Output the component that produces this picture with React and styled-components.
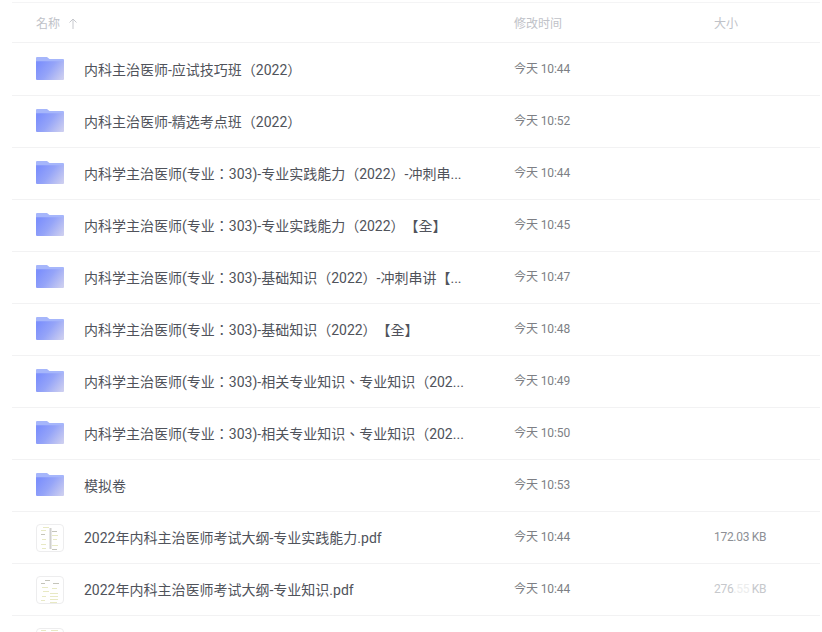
import React from 'react'
import styled, { createGlobalStyle } from 'styled-components'

const GlobalStyle = createGlobalStyle`
  html, body {
    margin: 0;
    height: 632px;
    overflow: hidden;
    background: #fff;
    font-family: Roboto, "Noto Sans CJK TC", sans-serif;
    text-spacing-trim: space-all;
  }
`

const List = styled.div`
  margin: 2px 2px 0 12px;
  height: 630px;
  overflow: hidden;
  border-top: 1px solid #f4f4f5;
`

const rowGrid = `
  display: grid;
  grid-template-columns: 478px 200px 1fr;
  align-items: center;
  padding-left: 24px;
  border-bottom: 1px solid #f2f2f3;
  box-sizing: border-box;
`

const HeaderRow = styled.div`
  ${rowGrid}
  height: 40px;
  font-size: 12px;
  color: #c0c2c8;
`

const SortArrow = styled.span`
  display: inline-flex;
  margin-left: 8px;
  vertical-align: -1px;
`

const Row = styled.div`
  ${rowGrid}
  height: ${p => (p.$first ? 53 : 52)}px;
  padding-top: ${p => (p.$first ? 1 : 0)}px;
`

const NameCell = styled.div`
  display: flex;
  align-items: center;
  gap: 20px;
  min-width: 0;
`

const Name = styled.span`
  white-space: nowrap;
  font-size: 14px;
  line-height: 20px;
  color: #50535b;
`

const Meta = styled.span`
  font-size: 12px;
  line-height: 16px;
  padding-bottom: 2px;
  color: #7d7f85;
  white-space: nowrap;
  letter-spacing: -0.1px;
`

const Size = styled(Meta)`
  color: #8d8f95;
  letter-spacing: -0.3px;
`

// the reference has this size half wiped out by a watermark
const Wiped = styled.span`
  color: ${p => (p.$heavy ? '#eceded' : '#c6c8cc')};
`

const FolderGlyph = styled.svg`
  width: 28px;
  height: 23px;
  flex: none;
  display: block;
  margin-bottom: 2px;
`

const Thumb = styled.svg`
  width: 28px;
  height: 28px;
  flex: none;
  display: block;
  box-sizing: border-box;
  background: #fff;
  border: 1px solid #ededee;
  border-radius: 4px;
`

const FolderIcon = ({ id }) => (
  <FolderGlyph viewBox="0 0 28 24" preserveAspectRatio="none">
    <defs>
      <linearGradient id={id} x1="0" y1="0.3" x2="1" y2="0.8">
        <stop offset="0" stopColor="#7d90fc" />
        <stop offset="0.45" stopColor="#95a4f8" />
        <stop offset="1" stopColor="#cbcdf0" />
      </linearGradient>
    </defs>
    <path d="M1 0h10l2.5 2H27a1 1 0 0 1 1 1v3H0V1a1 1 0 0 1 1-1z" fill="#a6b6fb" />
    <path d="M0 4.5h28V23a1 1 0 0 1-1 1H1a1 1 0 0 1-1-1z" fill={`url(#${id})`} />
  </FolderGlyph>
)

// tiny scan of the pdf's first page
const marks = {
  a: [[6, 2, 6], [4, 5, 5], [15, 6, 5], [4, 9, 4], [15, 10, 6], [5, 14, 4], [16, 14, 4], [4, 19, 5], [15, 20, 6], [5, 23, 4], [15, 24, 5]],
  b: [[8, 3, 5], [4, 6, 4], [16, 6, 6], [5, 10, 6], [15, 11, 5], [6, 14, 6], [13, 16, 8], [5, 19, 4], [13, 19, 8], [4, 23, 4], [13, 22, 8], [13, 25, 7]],
  c: [[4, 1, 5], [14, 1, 7]],
}

const PdfThumb = ({ kind }) => (
  <Thumb viewBox="0 0 26 26">
    {kind === 'a' && <rect x="12.5" y="3" width="2" height="21" fill="#d0d0ce" />}
    {marks[kind].map(([x, y, w]) => (
      <rect key={`${x}-${y}`} x={x} y={y} width={w} height="1" fill={y % 3 === 0 ? '#c4c4ba' : '#e8e9c4'} />
    ))}
  </Thumb>
)

const folders = [
  ['内科主治医师-应试技巧班（2022）', '今天 10:44'],
  ['内科主治医师-精选考点班（2022）', '今天 10:52'],
  ['内科学主治医师(专业：303)-专业实践能力（2022）-冲刺串...', '今天 10:44'],
  ['内科学主治医师(专业：303)-专业实践能力（2022）【全】', '今天 10:45'],
  ['内科学主治医师(专业：303)-基础知识（2022）-冲刺串讲【...', '今天 10:47'],
  ['内科学主治医师(专业：303)-基础知识（2022）【全】', '今天 10:48'],
  ['内科学主治医师(专业：303)-相关专业知识、专业知识（202...', '今天 10:49'],
  ['内科学主治医师(专业：303)-相关专业知识、专业知识（202...', '今天 10:50'],
  ['模拟卷', '今天 10:53'],
]

export default function App() {
  return (
    <>
      <GlobalStyle />
      <List>
        <HeaderRow>
          <span>
            名称
            <SortArrow>
              <svg width="10" height="11" viewBox="0 0 10 11" fill="none" stroke="#c6c8cd" strokeWidth="1">
                <path d="M5 1v10M1.5 4.5L5 1l3.5 3.5" />
              </svg>
            </SortArrow>
          </span>
          <span>修改时间</span>
          <span>大小</span>
        </HeaderRow>
        {folders.map(([name, time], i) => (
          <Row key={name + i} $first={i === 0}>
            <NameCell>
              <FolderIcon id={`folder-${i}`} />
              <Name>{name}</Name>
            </NameCell>
            <Meta>{time}</Meta>
            <span />
          </Row>
        ))}
        <Row>
          <NameCell>
            <PdfThumb kind="a" />
            <Name>2022年内科主治医师考试大纲-专业实践能力.pdf</Name>
          </NameCell>
          <Meta>今天 10:44</Meta>
          <Size>172.03 KB</Size>
        </Row>
        <Row>
          <NameCell>
            <PdfThumb kind="b" />
            <Name>2022年内科主治医师考试大纲-专业知识.pdf</Name>
          </NameCell>
          <Meta>今天 10:44</Meta>
          <Size>
            <Wiped>276</Wiped>
            <Wiped $heavy>.55</Wiped>
            <Wiped> KB</Wiped>
          </Size>
        </Row>
        <Row>
          <NameCell>
            <PdfThumb kind="c" />
          </NameCell>
        </Row>
      </List>
    </>
  )
}
